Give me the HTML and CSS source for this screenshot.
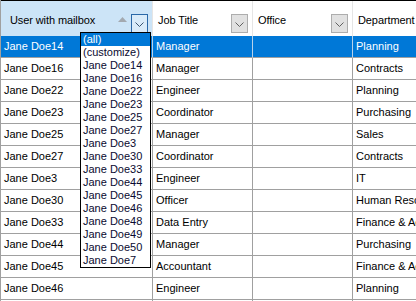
FILE: index.html
```html
<!DOCTYPE html>
<html>
<head>
<meta charset="utf-8">
<link rel="stylesheet" href="styles.css">
</head>
<body>
<div class="viewport">
<div class="grid">
  <div class="hdr">
    <div class="hcell active">
      <span class="htext">User with mailbox</span>
      <svg class="sort" width="9" height="5" viewBox="0 0 9 5"><polygon points="0,5 4.5,0 9,5" fill="#a3a9b0"/></svg>
      <span class="ddbtn on"><svg width="9" height="5" viewBox="0 0 9 5"><polyline points="0.5,0.5 4.5,4.5 8.5,0.5" fill="none" stroke="#3a5470" stroke-width="1"/></svg></span>
    </div>
    <div class="hcell">
      <span class="htext">Job Title</span>
      <span class="ddbtn"><svg width="9" height="5" viewBox="0 0 9 5"><polyline points="0.5,0.5 4.5,4.5 8.5,0.5" fill="none" stroke="#606060" stroke-width="1"/></svg></span>
    </div>
    <div class="hcell">
      <span class="htext">Office</span>
      <span class="ddbtn"><svg width="9" height="5" viewBox="0 0 9 5"><polyline points="0.5,0.5 4.5,4.5 8.5,0.5" fill="none" stroke="#606060" stroke-width="1"/></svg></span>
    </div>
    <div class="hcell">
      <span class="htext">Department</span>
      <span class="ddbtn"><svg width="9" height="5" viewBox="0 0 9 5"><polyline points="0.5,0.5 4.5,4.5 8.5,0.5" fill="none" stroke="#606060" stroke-width="1"/></svg></span>
    </div>
  </div>
  <div class="row sel"><div class="cell">Jane Doe14</div><div class="cell">Manager</div><div class="cell"></div><div class="cell">Planning</div></div>
  <div class="row"><div class="cell">Jane Doe16</div><div class="cell">Manager</div><div class="cell"></div><div class="cell">Contracts</div></div>
  <div class="row"><div class="cell">Jane Doe22</div><div class="cell">Engineer</div><div class="cell"></div><div class="cell">Planning</div></div>
  <div class="row"><div class="cell">Jane Doe23</div><div class="cell">Coordinator</div><div class="cell"></div><div class="cell">Purchasing</div></div>
  <div class="row"><div class="cell">Jane Doe25</div><div class="cell">Manager</div><div class="cell"></div><div class="cell">Sales</div></div>
  <div class="row"><div class="cell">Jane Doe27</div><div class="cell">Coordinator</div><div class="cell"></div><div class="cell">Contracts</div></div>
  <div class="row"><div class="cell">Jane Doe3</div><div class="cell">Engineer</div><div class="cell"></div><div class="cell">IT</div></div>
  <div class="row"><div class="cell">Jane Doe30</div><div class="cell">Officer</div><div class="cell"></div><div class="cell">Human Resources</div></div>
  <div class="row"><div class="cell">Jane Doe33</div><div class="cell">Data Entry</div><div class="cell"></div><div class="cell">Finance &amp; Accounting</div></div>
  <div class="row"><div class="cell">Jane Doe44</div><div class="cell">Manager</div><div class="cell"></div><div class="cell">Purchasing</div></div>
  <div class="row"><div class="cell">Jane Doe45</div><div class="cell">Accountant</div><div class="cell"></div><div class="cell">Finance &amp; Accounting</div></div>
  <div class="row"><div class="cell">Jane Doe46</div><div class="cell">Engineer</div><div class="cell"></div><div class="cell">Planning</div></div>
  <div class="row"><div class="cell">Jane Doe48</div><div class="cell">Manager</div><div class="cell"></div><div class="cell">Sales</div></div>

  <div class="dropdown">
    <div class="item hi">(all)</div>
    <div class="item">(customize)</div>
    <div class="item">Jane Doe14</div>
    <div class="item">Jane Doe16</div>
    <div class="item">Jane Doe22</div>
    <div class="item">Jane Doe23</div>
    <div class="item">Jane Doe25</div>
    <div class="item">Jane Doe27</div>
    <div class="item">Jane Doe3</div>
    <div class="item">Jane Doe30</div>
    <div class="item">Jane Doe33</div>
    <div class="item">Jane Doe44</div>
    <div class="item">Jane Doe45</div>
    <div class="item">Jane Doe46</div>
    <div class="item">Jane Doe48</div>
    <div class="item">Jane Doe49</div>
    <div class="item">Jane Doe50</div>
    <div class="item">Jane Doe7</div>
  </div>
</div>
</div>
</body>
</html>
```
FILE: styles.css
```css
html, body {
  margin: 0;
  padding: 0;
  background: #ffffff;
  overflow: hidden;
  width: 416px;
  height: 301px;
}
body {
  font-family: "Liberation Sans", Arial, sans-serif;
  font-size: 11px;
  color: #000000;
}
.viewport {
  width: 416px;
  height: 301px;
  overflow: hidden;
}
.grid {
  position: relative;
  width: 453px;
  border-left: 1px solid #a0a0a0;
}
.hdr {
  display: grid;
  grid-template-columns: 152px 100px 100px 100px;
  height: 36px;
  border-top: 1px solid #000000;
  box-sizing: border-box;
}
.hcell {
  display: flex;
  align-items: center;
  border-right: 1px solid #e5e5e5;
  padding-left: 5px;
  background: #ffffff;
  box-sizing: border-box;
}
.hcell.active {
  background: #cce4f7;
  padding-left: 9px;
}
.htext {
  flex: 1;
  white-space: nowrap;
  padding-top: 3px;
  font-size: 11px;
  letter-spacing: -0.1px;
}
.sort {
  align-self: flex-start;
  margin-top: 16px;
  margin-right: 4px;
}
.ddbtn {
  align-self: flex-end;
  margin-bottom: 3px;
  margin-right: 4px;
  width: 17px;
  height: 19px;
  box-sizing: border-box;
  border: 1px solid #adadad;
  background: #e1e1e1;
  display: flex;
  align-items: center;
  justify-content: center;
  padding-top: 1px;
}
.ddbtn.on {
  border-color: #2a68a8;
  background: #d9ebf9;
}
.row {
  display: grid;
  grid-template-columns: 152px 100px 100px 100px;
  height: 22px;
}
.cell {
  box-sizing: border-box;
  border-right: 1px solid #a0a0a0;
  border-bottom: 1px solid #a0a0a0;
  padding-left: 3px;
  line-height: 21px;
  white-space: nowrap;
  overflow: hidden;
}
.row.sel .cell {
  background: #0078d7;
  color: #ffffff;
  border-right-color: #b8d2ea;
}
.dropdown {
  position: absolute;
  left: 79px;
  top: 32px;
  width: 71px;
  height: 236px;
  box-sizing: border-box;
  border: 1px solid #000000;
  background: #ffffff;
}
.item {
  height: 13px;
  line-height: 13px;
  padding-left: 2px;
  white-space: nowrap;
  color: #0a0a30;
}
.item.hi {
  background: #0078d7;
  color: #ffffff;
}
```
